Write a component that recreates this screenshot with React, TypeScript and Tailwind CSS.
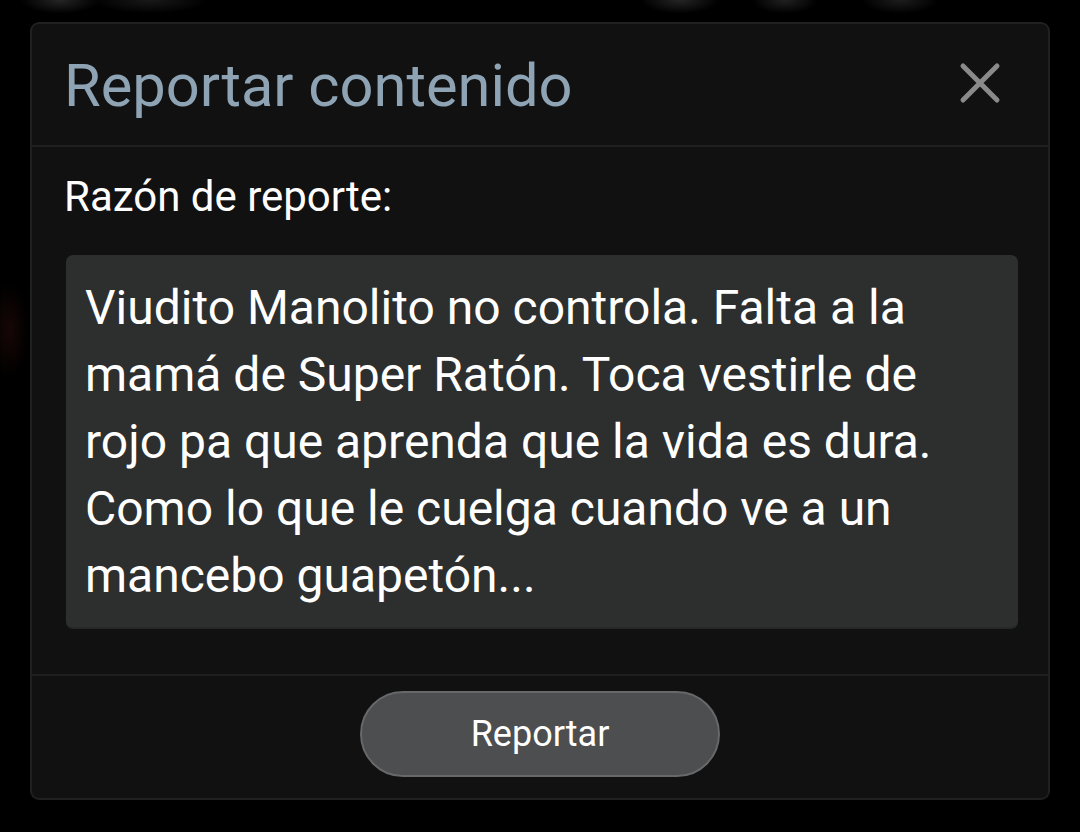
import React from "react";

export default function App() {
  const font = { fontFamily: "Roboto, 'Noto Sans', sans-serif" };
  return (
    <div
      className="w-[1080px] h-[832px] bg-black overflow-hidden pt-[22px] pl-[30px] bg-[radial-gradient(ellipse_40px_14px_at_60px_0px,#262626,transparent),radial-gradient(ellipse_60px_14px_at_150px_0px,#1a1a1a,transparent),radial-gradient(ellipse_40px_14px_at_680px_0px,#262626,transparent),radial-gradient(ellipse_34px_14px_at_785px_0px,#222,transparent),radial-gradient(ellipse_40px_14px_at_900px_0px,#1e1e1e,transparent),radial-gradient(ellipse_20px_50px_at_10px_330px,#170806,transparent)]"
      style={font}
    >
      <div className="w-[1020px] h-[778px] flex flex-col bg-[#111111] border-2 border-[#202020] rounded-[9px] shadow-[0_0_20px_rgba(0,0,0,0.8)]">
        {/* header */}
        <div className="h-[123px] flex items-center justify-between pl-[32px] pr-[46px] border-b-2 border-[#1f1f1f]">
          <span className="text-[59.6px] leading-none text-[#8ea3b4] pt-[4px]">Reportar contenido</span>
          <svg width="44" height="44" viewBox="0 0 44 44" className="mt-[-4px]">
            <path d="M5 5 L39 39 M39 5 L5 39" stroke="#8a8a8a" strokeWidth="5" strokeLinecap="round" />
          </svg>
        </div>
        {/* body */}
        <div className="flex-1 flex flex-col pl-[32px] pr-[30px] pt-[24px] border-b-2 border-[#1f1f1f]">
          <div className="text-[42px] leading-[52px] text-white">Razón de reporte:</div>
          <div className="mt-[32px] ml-[2px] w-[952px] h-[374px] bg-[#2d2e2e] rounded-[7px] border-b-2 border-[#262727] px-[19px] pt-[19px] text-[48px] leading-[67px] text-white">
            Viudito Manolito no controla. Falta a la mamá de Super Ratón. Toca vestirle de rojo pa que aprenda que la vida es dura. Como lo que le cuelga cuando ve a un mancebo guapetón...
          </div>
        </div>
        {/* footer */}
        <div className="h-[122px] flex items-center justify-center pb-[6px]">
          <button className="w-[360px] h-[86px] rounded-full bg-[#4d4e4f] border-2 border-[#676869] text-white text-[36px] leading-none">
            Reportar
          </button>
        </div>
      </div>
    </div>
  );
}
